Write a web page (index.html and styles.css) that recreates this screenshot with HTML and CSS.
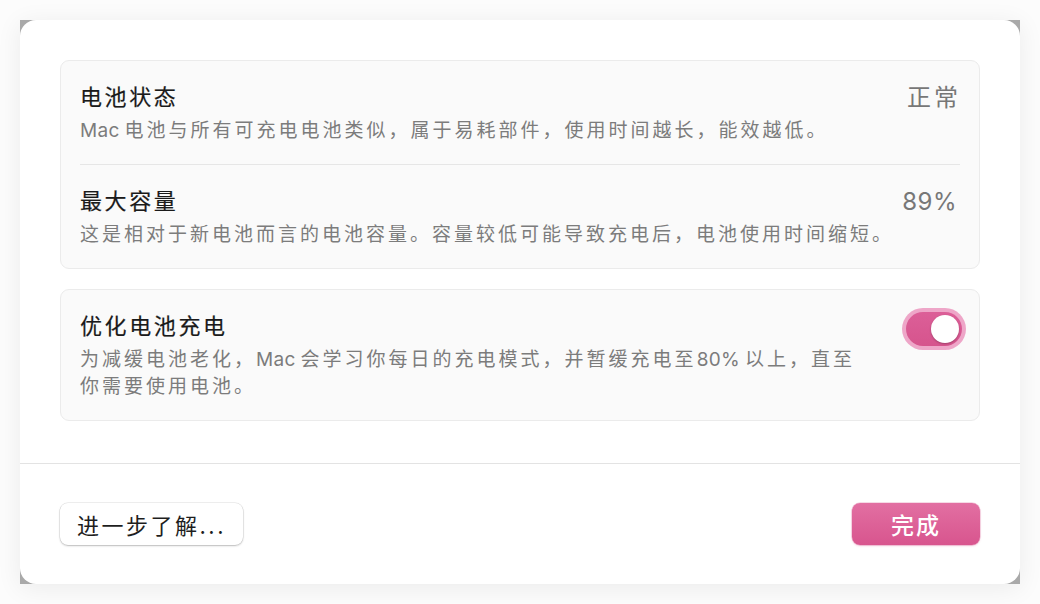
FILE: index.html
```html
<!DOCTYPE html>
<html lang="zh-CN">
<head>
    <meta charset="UTF-8">
    <meta name="viewport" content="width=device-width, initial-scale=1.0">
    <title>电池健康</title>
    <link rel="stylesheet" href="styles.css">
</head>
<body>
    <div class="sheet-frame">
        <div class="sheet">
            <div class="sheet-body">
                <div class="card">
                    <div class="row">
                        <div class="row-text">
                            <div class="row-title">电池状态</div>
                            <div class="row-desc"><span class="latin">Mac</span>电池与所有可充电电池类似，属于易耗部件，使用时间越长，能效越低。</div>
                        </div>
                        <div class="row-value">正常</div>
                    </div>
                    <div class="row-sep"></div>
                    <div class="row">
                        <div class="row-text">
                            <div class="row-title">最大容量</div>
                            <div class="row-desc">这是相对于新电池而言的电池容量。容量较低可能导致充电后，电池使用时间缩短。</div>
                        </div>
                        <div class="row-value num">89%</div>
                    </div>
                </div>

                <div class="card">
                    <div class="row">
                        <div class="row-text narrow">
                            <div class="row-title">优化电池充电</div>
                            <div class="row-desc">为减缓电池老化，<span class="latin">Mac</span>会学习你每日的充电模式，并暂缓充电至<span class="latin">80%</span>以上，直至你需要使用电池。</div>
                        </div>
                        <div class="toggle on">
                            <div class="toggle-track">
                                <div class="toggle-knob"></div>
                            </div>
                        </div>
                    </div>
                </div>
            </div>

            <div class="sheet-footer">
                <button class="btn">进一步了解...</button>
                <button class="btn btn-primary">完成</button>
            </div>
        </div>
    </div>
</body>
</html>
```

FILE: styles.css
```css
html, body { margin: 0; padding: 0; }
body { font-family: Inter, "Noto Sans CJK SC", sans-serif; background: #fcfcfc; width: 1040px; height: 604px; overflow: hidden; }

.sheet-frame { margin: 20px; background: #a9a9a9; box-shadow: 0 4px 24px rgba(0,0,0,0.07); }
.sheet { background: #fff; border-radius: 16px; }

.sheet-body { padding: 40px 40px 42px; display: flex; flex-direction: column; gap: 20px; }

.card { background: #fafafa; border: 1px solid #ebebeb; border-radius: 9px; }
.row { display: flex; justify-content: space-between; align-items: flex-start; padding: 21px 21px 20px 19px; }
.row-sep { height: 1px; background: #e6e6e6; margin: 0 19px; }
.row-text.narrow { max-width: 790px; }

.row-title { font-size: 22px; line-height: 30px; letter-spacing: 2.6px; font-weight: 400; color: #1a1a1a; margin-bottom: 5px; -webkit-text-stroke: 0.2px #1a1a1a; }
.row-desc { font-size: 19px; line-height: 27px; letter-spacing: 3px; color: #7c7c7c; }
.row-desc .latin { letter-spacing: 0.3px; margin-right: 5px; }
.row-value { font-size: 24px; line-height: 30px; letter-spacing: 3px; color: #777; margin: 1px -3px 0 0; }
.row-value.num { letter-spacing: 0.5px; margin-right: 1px; }

.toggle { width: 64px; height: 42px; border-radius: 21px; background: #eea6c8; box-sizing: border-box; padding: 4px; margin: -3px -8px 0 0; }
.toggle-track { height: 34px; border-radius: 17px; background: linear-gradient(#dc5f98, #d6548d); display: flex; align-items: center; justify-content: flex-end; padding: 0 3px; }
.toggle-knob { width: 28px; height: 28px; border-radius: 50%; background: #fff; box-shadow: 0 1px 2px rgba(0,0,0,0.25); }

.sheet-footer { border-top: 1px solid #e3e3e3; padding: 39px 40px; display: flex; justify-content: space-between; align-items: center; }

.btn { font-family: inherit; height: 42px; border: none; border-radius: 8px; background: #fff; color: #1e1e1e; font-size: 22px; letter-spacing: 2.5px; padding: 0 8px; box-shadow: 0 0 0 0.5px rgba(0,0,0,0.12), 0 1px 2px rgba(0,0,0,0.22); width: 183px; }
.btn-primary { width: 128px; color: #fff; font-weight: 500; font-size: 23px; letter-spacing: 2px; background: linear-gradient(#e26fa2, #d8558e); box-shadow: 0 0 0 0.5px rgba(216,85,142,0.4), 0 1px 2px rgba(216,85,142,0.3); }
```
